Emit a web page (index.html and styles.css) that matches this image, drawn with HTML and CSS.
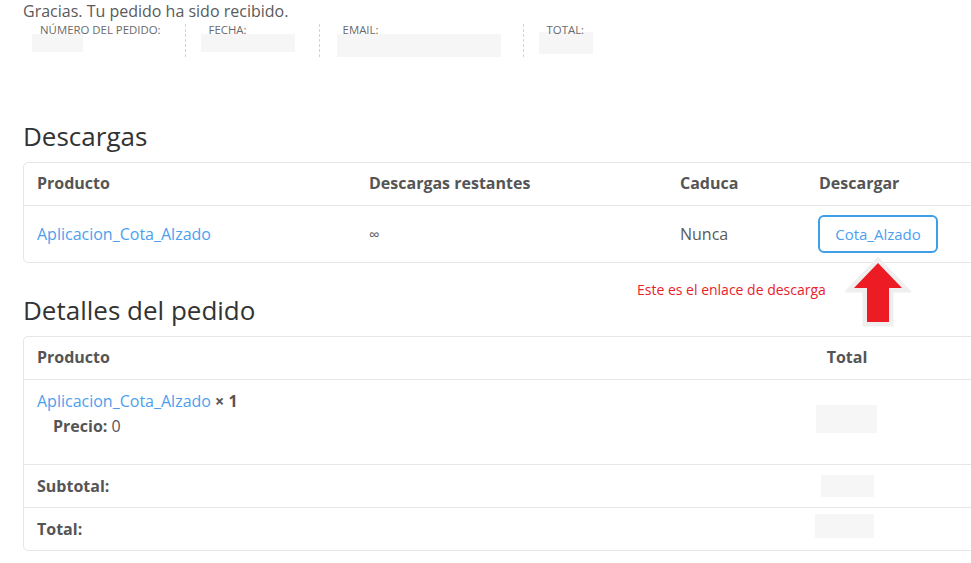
FILE: index.html
```html
<!DOCTYPE html>
<html lang="es">
<head>
    <meta charset="UTF-8">
    <meta name="viewport" content="width=device-width, initial-scale=1.0">
    <title>Pedido recibido</title>
    <link rel="stylesheet" href="styles.css">
</head>
<body>
    <div class="page">
        <p class="thanks">Gracias. Tu pedido ha sido recibido.</p>

        <ul class="overview">
            <li>
                <span class="ov-label">Número del pedido:</span>
                <span class="ov-value w-order"></span>
            </li>
            <li>
                <span class="ov-label">Fecha:</span>
                <span class="ov-value w-date"></span>
            </li>
            <li class="ov-email">
                <span class="ov-label">Email:</span>
                <span class="ov-value w-email"></span>
            </li>
            <li>
                <span class="ov-label">Total:</span>
                <span class="ov-value w-total"></span>
            </li>
        </ul>

        <!-- Descargas -->
        <h2 class="section-title">Descargas</h2>
        <table class="shop-table downloads">
            <thead>
                <tr>
                    <th class="col-product">Producto</th>
                    <th class="col-remaining">Descargas restantes</th>
                    <th class="col-expires">Caduca</th>
                    <th>Descargar</th>
                </tr>
            </thead>
            <tbody>
                <tr>
                    <td><a href="#">Aplicacion_Cota_Alzado</a></td>
                    <td class="infinite">&infin;</td>
                    <td>Nunca</td>
                    <td><a href="#" class="btn-download">Cota_Alzado</a></td>
                </tr>
            </tbody>
        </table>

        <!-- Detalles del pedido -->
        <h2 class="section-title">Detalles del pedido</h2>
        <table class="shop-table order">
            <thead>
                <tr>
                    <th>Producto</th>
                    <th class="col-total">Total</th>
                </tr>
            </thead>
            <tbody>
                <tr>
                    <td class="item-cell">
                        <a href="#">Aplicacion_Cota_Alzado</a> <strong>&times;&nbsp;1</strong>
                        <div class="item-meta"><strong>Precio:</strong> 0</div>
                    </td>
                    <td class="col-total"><span class="hidden-value h-item"></span></td>
                </tr>
            </tbody>
            <tfoot>
                <tr>
                    <th>Subtotal:</th>
                    <td class="col-total"><span class="hidden-value h-sub"></span></td>
                </tr>
                <tr>
                    <th>Total:</th>
                    <td class="col-total"><span class="hidden-value h-total"></span></td>
                </tr>
            </tfoot>
        </table>

        <!-- annotation drawn over the screenshot -->
        <span class="note">Este es el enlace de descarga</span>
        <svg class="note-arrow" width="66" height="78" viewBox="0 0 66 78">
            <path d="M33 11 L57 36 L44 36 L44 70 L22 70 L22 36 L9 36 Z" fill="#ed1c24" stroke="#efefef" stroke-width="9" stroke-linejoin="miter" paint-order="stroke fill"/>
        </svg>
    </div>
</body>
</html>
```

FILE: styles.css
```css
body {
    margin: 0;
    background: #fff;
    font-family: "Open Sans", "Liberation Sans", Arial, sans-serif;
    color: #555;
    overflow: hidden;
}
.page {
    position: relative;
    width: 1000px;
    padding-left: 23px;
}
a {
    color: #4d9fee;
    text-decoration: none;
}
.thanks {
    margin: 0;
    font-size: 16px;
    line-height: 22px;
    color: #5a5a5a;
}
.overview {
    display: flex;
    list-style: none;
    margin: 2px 0 0 17px;
    padding: 0;
}
.overview li {
    padding: 0 24px 0 23px;
    border-right: 1px dashed #d4d4d4;
}
.overview li:first-child {
    padding-left: 0;
}
.overview li:last-child {
    border-right: 0;
}
.overview .ov-email {
    padding-right: 22px;
}
.ov-label {
    display: block;
    font-size: 11.4px;
    line-height: 12px;
    text-transform: uppercase;
    color: #6a6a6a;
}
.ov-value {
    display: block;
    background: #f6f6f6;
    margin: -2px 0 0 -8px;
    height: 18px;
}
.w-order { width: 51px; }
.w-date { width: 94px; }
.w-email {
    width: 164px;
    height: 23px;
    margin-left: -6px;
}
.w-total {
    width: 54px;
    height: 22px;
    margin-top: -4px;
}
.section-title {
    margin: 64px 0 10px;
    font-size: 26px;
    line-height: 31px;
    font-weight: 400;
    color: #333;
}
.downloads + .section-title {
    margin-top: 32px;
}
.shop-table {
    width: 1000px;
    border: 1px solid #e6e6e6;
    border-radius: 5px;
    border-collapse: separate;
    border-spacing: 0;
    table-layout: fixed;
    font-size: 16px;
}
.shop-table th,
.shop-table td {
    text-align: left;
    padding: 11px 13px 12px;
    line-height: 19px;
    vertical-align: middle;
}
.shop-table th {
    font-weight: 700;
    color: #555;
}
.shop-table thead th {
    border-bottom: 1px solid #e6e6e6;
}
.downloads td {
    padding: 9px 13px;
    color: #5a5a5a;
}
.col-product { width: 306px; }
.col-remaining { width: 285px; }
.col-expires { width: 113px; }
.infinite {
    font-size: 15px;
}
.btn-download {
    display: inline-block;
    box-sizing: border-box;
    width: 120px;
    height: 38px;
    margin-left: -1px;
    border: 2px solid #3e9fe6;
    border-radius: 6px;
    text-align: center;
    font-size: 15px;
    line-height: 34px;
    color: #4d9fee;
}
.order .col-total {
    width: 324px;
    text-align: center;
}
.order tbody td,
.order tfoot tr:first-child th,
.order tfoot tr:first-child td {
    border-bottom: 1px solid #e6e6e6;
}
.order tfoot th,
.order tfoot td {
    padding: 11px 13px;
    line-height: 20px;
}
.item-cell {
    padding: 11px 13px !important;
    line-height: 20px !important;
}
.item-cell strong {
    color: #555;
}
.item-meta {
    margin: 5px 0 17px 16px;
}
.hidden-value {
    display: block;
    margin: 0 auto;
    background: #f6f6f6;
}
.h-item {
    width: 61px;
    height: 28px;
    margin-bottom: 6px;
    position: relative;
    left: -1px;
}
.h-sub {
    width: 53px;
    height: 22px;
    margin-top: -1px;
    margin-bottom: -1px;
}
.h-total {
    width: 59px;
    height: 24px;
    margin-top: -5px;
    margin-bottom: 1px;
    position: relative;
    left: -3px;
}
.note {
    position: absolute;
    left: 637px;
    top: 280px;
    font-size: 14px;
    line-height: 20px;
    color: #e8222b;
}
.note-arrow {
    position: absolute;
    left: 845px;
    top: 252px;
}
```
